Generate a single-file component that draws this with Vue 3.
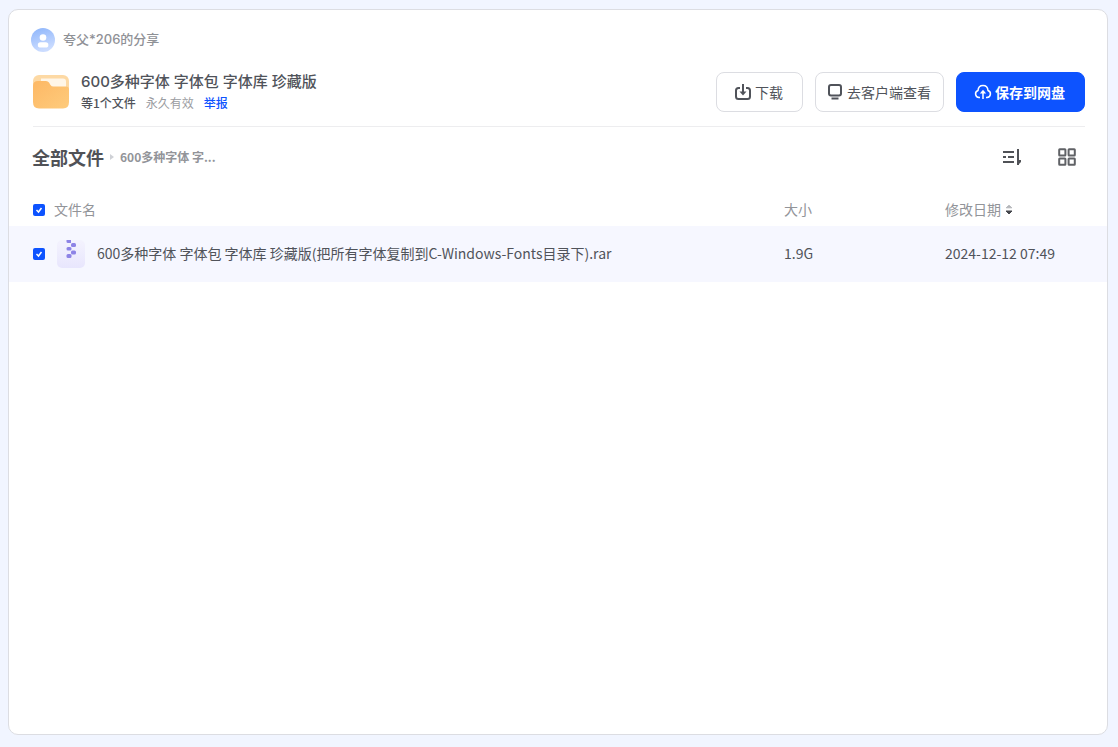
<script setup>
import { ref, computed } from 'vue'

const files = ref([
  {
    name: '600多种字体 字体包 字体库 珍藏版(把所有字体复制到C-Windows-Fonts目录下).rar',
    size: '1.9G',
    date: '2024-12-12 07:49',
    checked: true,
  },
])

const allChecked = computed({
  get: () => files.value.every((f) => f.checked),
  set: (v) => files.value.forEach((f) => (f.checked = v)),
})
</script>

<template>
  <main class="card">
    <header class="head">
      <div class="sharer">
        <svg class="avatar" viewBox="0 0 24 24" aria-hidden="true">
          <defs>
            <linearGradient id="avatarFill" x1="0" y1="0" x2="0.3" y2="1">
              <stop offset="0" stop-color="#8db5fb" />
              <stop offset="1" stop-color="#cbdcff" />
            </linearGradient>
          </defs>
          <circle cx="12" cy="12" r="12" fill="url(#avatarFill)" />
          <circle cx="12" cy="9.500" r="3.300" fill="#fff" />
          <rect x="6.800" y="14.200" width="10.600" height="5.400" rx="2.700" fill="#fff" />
        </svg>
        <span class="who">夸父*206的分享</span>
      </div>

      <div class="share">
        <svg class="folder" viewBox="0 0 36 34" aria-hidden="true">
          <defs>
            <linearGradient id="folderFill" x1="0" y1="0" x2="1" y2="1">
              <stop offset="0" stop-color="#fdb865" />
              <stop offset="1" stop-color="#fecb7c" />
            </linearGradient>
          </defs>
          <rect width="36" height="30" rx="6" fill="#fdd9a4" />
          <path d="M8 3.500h22q3 0 3 3V13H8z" fill="#fff6e8" />
          <path d="M0 11q0-5 5-5h8q2 0 3 1.500l1.500 2.500q1 1.500 3 1.500h12.500q3 0 3 3V27q0 6.500-6 6.500H6q-6 0-6-6.500z" fill="url(#folderFill)" />
        </svg>
        <div class="info">
          <h1>600多种字体 字体包 字体库 珍藏版</h1>
          <p class="meta">
            <span class="count">等1个文件</span>
            <span class="valid">永久有效</span>
            <a href="#report">举报</a>
          </p>
        </div>
        <div class="actions">
          <button type="button" class="btn download">
            <svg width="18" height="18" viewBox="0 0 18 18" fill="none" stroke="#50535a" stroke-width="2" aria-hidden="true">
              <path d="M6 5H4.500Q2 5 2 7.500v6Q2 16 4.500 16h9q2.500 0 2.500-2.500v-6Q16 5 13.500 5H12M9 1v9" />
              <path d="M5.500 8.500h7L9 12.500z" fill="#50535a" stroke="none" />
            </svg>
            <span>下载</span>
          </button>
          <button type="button" class="btn client">
            <svg width="16" height="18" viewBox="0 0 16 18" fill="none" stroke="#50535a" stroke-width="2" aria-hidden="true">
              <rect x="2" y="2" width="12" height="10.500" rx="2" />
              <path d="M4.500 15.500h7" />
            </svg>
            <span>去客户端查看</span>
          </button>
          <button type="button" class="btn save">
            <svg width="18" height="18" viewBox="0 0 18 18" fill="none" stroke="#fff" stroke-width="1.500" aria-hidden="true">
              <path d="M6 14.500H5a3.600 3.600 0 0 1-1-7C4.200 4.500 6.200 2.500 9 2.500s4.800 2 5 5a3.600 3.600 0 0 1-1 7h-1M9 16V8" />
              <path d="M5.800 10.500L9 6.800l3.200 3.700z" fill="#fff" stroke="none" />
            </svg>
            <span>保存到网盘</span>
          </button>
        </div>
      </div>
    </header>

    <div class="toolbar">
      <nav class="crumbs">
        <a href="#all" class="root">全部文件</a>
        <svg width="4" height="6" viewBox="0 0 4 6" aria-hidden="true"><path d="M0 0l4 3-4 3z" fill="#cfd1d6" /></svg>
        <a href="#folder" class="current">600多种字体 字...</a>
      </nav>
      <div class="views">
        <button type="button" aria-label="排序">
          <svg width="20" height="18" viewBox="0 0 20 18" fill="none" stroke="#505257" stroke-width="2" aria-hidden="true">
            <path d="M1 4h11M1 9h3M6 9h6M1 14h11M16 1v16" />
            <path d="M16 17v-5h3v2z" fill="#505257" stroke="none" />
          </svg>
        </button>
        <button type="button" aria-label="网格视图">
          <svg width="18" height="18" viewBox="0 0 18 18" fill="none" stroke="#606266" stroke-width="2" aria-hidden="true">
            <rect x="1.200" y="1.200" width="6.200" height="6.200" rx="0.500" />
            <rect x="10.600" y="1.200" width="6.200" height="6.200" rx="0.500" />
            <rect x="1.200" y="10.600" width="6.200" height="6.200" rx="0.500" />
            <rect x="10.600" y="10.600" width="6.200" height="6.200" rx="0.500" />
          </svg>
        </button>
      </div>
    </div>

    <table class="files">
      <thead>
        <tr>
          <th class="pick"><input v-model="allChecked" type="checkbox" aria-label="全选" /></th>
          <th>文件名</th>
          <th class="size">大小</th>
          <th class="date">
            <span class="sort">
              修改日期
              <svg width="8" height="12" viewBox="0 0 8 12" aria-hidden="true">
                <path d="M1.200 4.800L4 2.300l2.800 2.500z" fill="#b4b6ba" stroke="#b4b6ba" stroke-linejoin="round" />
                <path d="M1 8L4 11 7 8z" fill="#45474c" stroke="#45474c" stroke-linejoin="round" />
              </svg>
            </span>
          </th>
        </tr>
      </thead>
      <tbody>
        <tr v-for="(file, i) in files" :key="file.name" :class="{ selected: file.checked }">
          <td class="pick"><input :id="'file-' + i" v-model="file.checked" type="checkbox" /></td>
          <td class="title">
            <label class="name" :for="'file-' + i">
              <svg width="28" height="30" viewBox="0 0 28 30" aria-hidden="true">
                <defs>
                  <linearGradient id="zipFill" x1="0" y1="0" x2="0" y2="1">
                    <stop offset="0" stop-color="#f4f3fe" />
                    <stop offset="1" stop-color="#e8e6fd" />
                  </linearGradient>
                </defs>
                <rect y="1" width="28" height="28" rx="5" fill="url(#zipFill)" />
                <g fill="#8d83e6">
                  <path d="M9.500 1h4.500v3h-3q-1.500 0-1.500-1.500z" />
                  <rect x="14" y="4" width="5" height="4" rx="1.500" />
                  <rect x="9.500" y="8" width="5" height="3.500" rx="1.500" />
                  <rect x="14" y="11.500" width="5" height="4" rx="1.500" />
                  <rect x="9.500" y="15" width="5" height="4" rx="1.500" />
                </g>
              </svg>
              <span>{{ file.name }}</span>
            </label>
          </td>
          <td class="size">{{ file.size }}</td>
          <td class="date">{{ file.date }}</td>
        </tr>
      </tbody>
    </table>
  </main>
</template>

<style>
html,
body,
#app {
  height: 100%;
}

body {
  margin: 0;
  background: #f1f5ff;
}

#app {
  display: flex;
  box-sizing: border-box;
  padding: 9px 10px 12px 8px;
}
</style>

<style scoped>
.card,
.card * {
  box-sizing: border-box;
}

.card {
  flex: 1;
  min-width: 0;
  border: 1px solid #dcdde2;
  border-radius: 10px;
  background: #fff;
  color: #50535a;
  font: 14px/20px "Noto Sans CJK SC", sans-serif;
}

button {
  font: inherit;
  color: inherit;
  cursor: pointer;
}

a {
  text-decoration: none;
}

svg {
  display: block;
  flex: none;
}

.head {
  margin: 0 22px 0 24px;
  padding: 18px 0 13px;
  border-bottom: 1px solid #ededef;
}

.sharer {
  display: flex;
  align-items: center;
  gap: 8px;
  margin-left: -2px;
  color: #8f9196;
  font: 500 13px/20px Inter, "Noto Sans CJK SC", sans-serif;
}

.who {
  padding-bottom: 2px;
}

.avatar {
  width: 24px;
  height: 24px;
}

.share {
  display: flex;
  align-items: center;
  margin-top: 19px;
}

.folder {
  width: 36px;
  height: 34px;
}

.info {
  flex: 1;
  margin-left: 12px;
}

h1 {
  margin: 0;
  font: 500 15px/22px Inter, "Noto Sans CJK SC", sans-serif;
  color: #50535a;
}

.meta {
  display: flex;
  gap: 10px;
  margin: 0;
  font-size: 12px;
  line-height: 20px;
}

.count {
  font-weight: 500;
}

.valid {
  color: #9a9ca1;
}

.meta a {
  font-weight: 500;
  color: #0d53ff;
}

.actions {
  display: flex;
  gap: 12px;
}

.btn {
  display: flex;
  align-items: center;
  justify-content: center;
  gap: 3px;
  height: 40px;
  padding: 0 19px 0 17px;
  border: 1px solid #dcdde2;
  border-radius: 8px;
  background: #fff;
}

.btn.client {
  gap: 4px;
  padding: 0 12px 0 11px;
}

.btn.save {
  border-color: #0d53ff;
  background: #0d53ff;
  color: #fff;
  font-weight: 700;
}

.toolbar {
  display: flex;
  align-items: center;
  justify-content: space-between;
  height: 60px;
  padding: 0 31px 0 23px;
}

.crumbs {
  display: flex;
  align-items: center;
  gap: 6px;
}

.root {
  font-size: 18px;
  font-weight: 700;
  color: #505257;
}

.current {
  font-size: 12px;
  font-weight: 700;
  color: #929499;
}

.views {
  display: flex;
  gap: 36px;
}

.views button {
  padding: 0;
  border: 0;
  background: none;
}

.files {
  width: 100%;
  margin-top: 7px;
  border-collapse: collapse;
  table-layout: fixed;
}

th,
td {
  padding: 0 0 2px;
  text-align: left;
  font-weight: 400;
}

th {
  height: 32px;
  color: #929499;
}

td {
  height: 56px;
}

.selected {
  background: #f6f7ff;
}

.pick {
  width: 45px;
  padding: 0 0 0 24px;
}

.title {
  padding: 0;
}

.size {
  width: 161px;
}

.date {
  width: 162px;
}

.sort {
  display: flex;
  align-items: center;
  gap: 4px;
}

.name {
  display: flex;
  align-items: center;
  gap: 12px;
  padding-left: 3px;
}

.name span {
  padding-bottom: 2px;
}

input {
  appearance: none;
  display: block;
  width: 12px;
  height: 12px;
  margin: 0;
  border: 1px solid #c4c7ce;
  border-radius: 2px;
  background: #fff;
}

input:checked {
  border: 0;
  background: #0d53ff url("data:image/svg+xml,%3Csvg xmlns='http://www.w3.org/2000/svg' viewBox='0 0 12 12'%3E%3Cpath d='M3.500 6l2 2 3-4' fill='none' stroke='%23fff' stroke-width='1.500'/%3E%3C/svg%3E") center / 12px 12px no-repeat;
}
</style>
